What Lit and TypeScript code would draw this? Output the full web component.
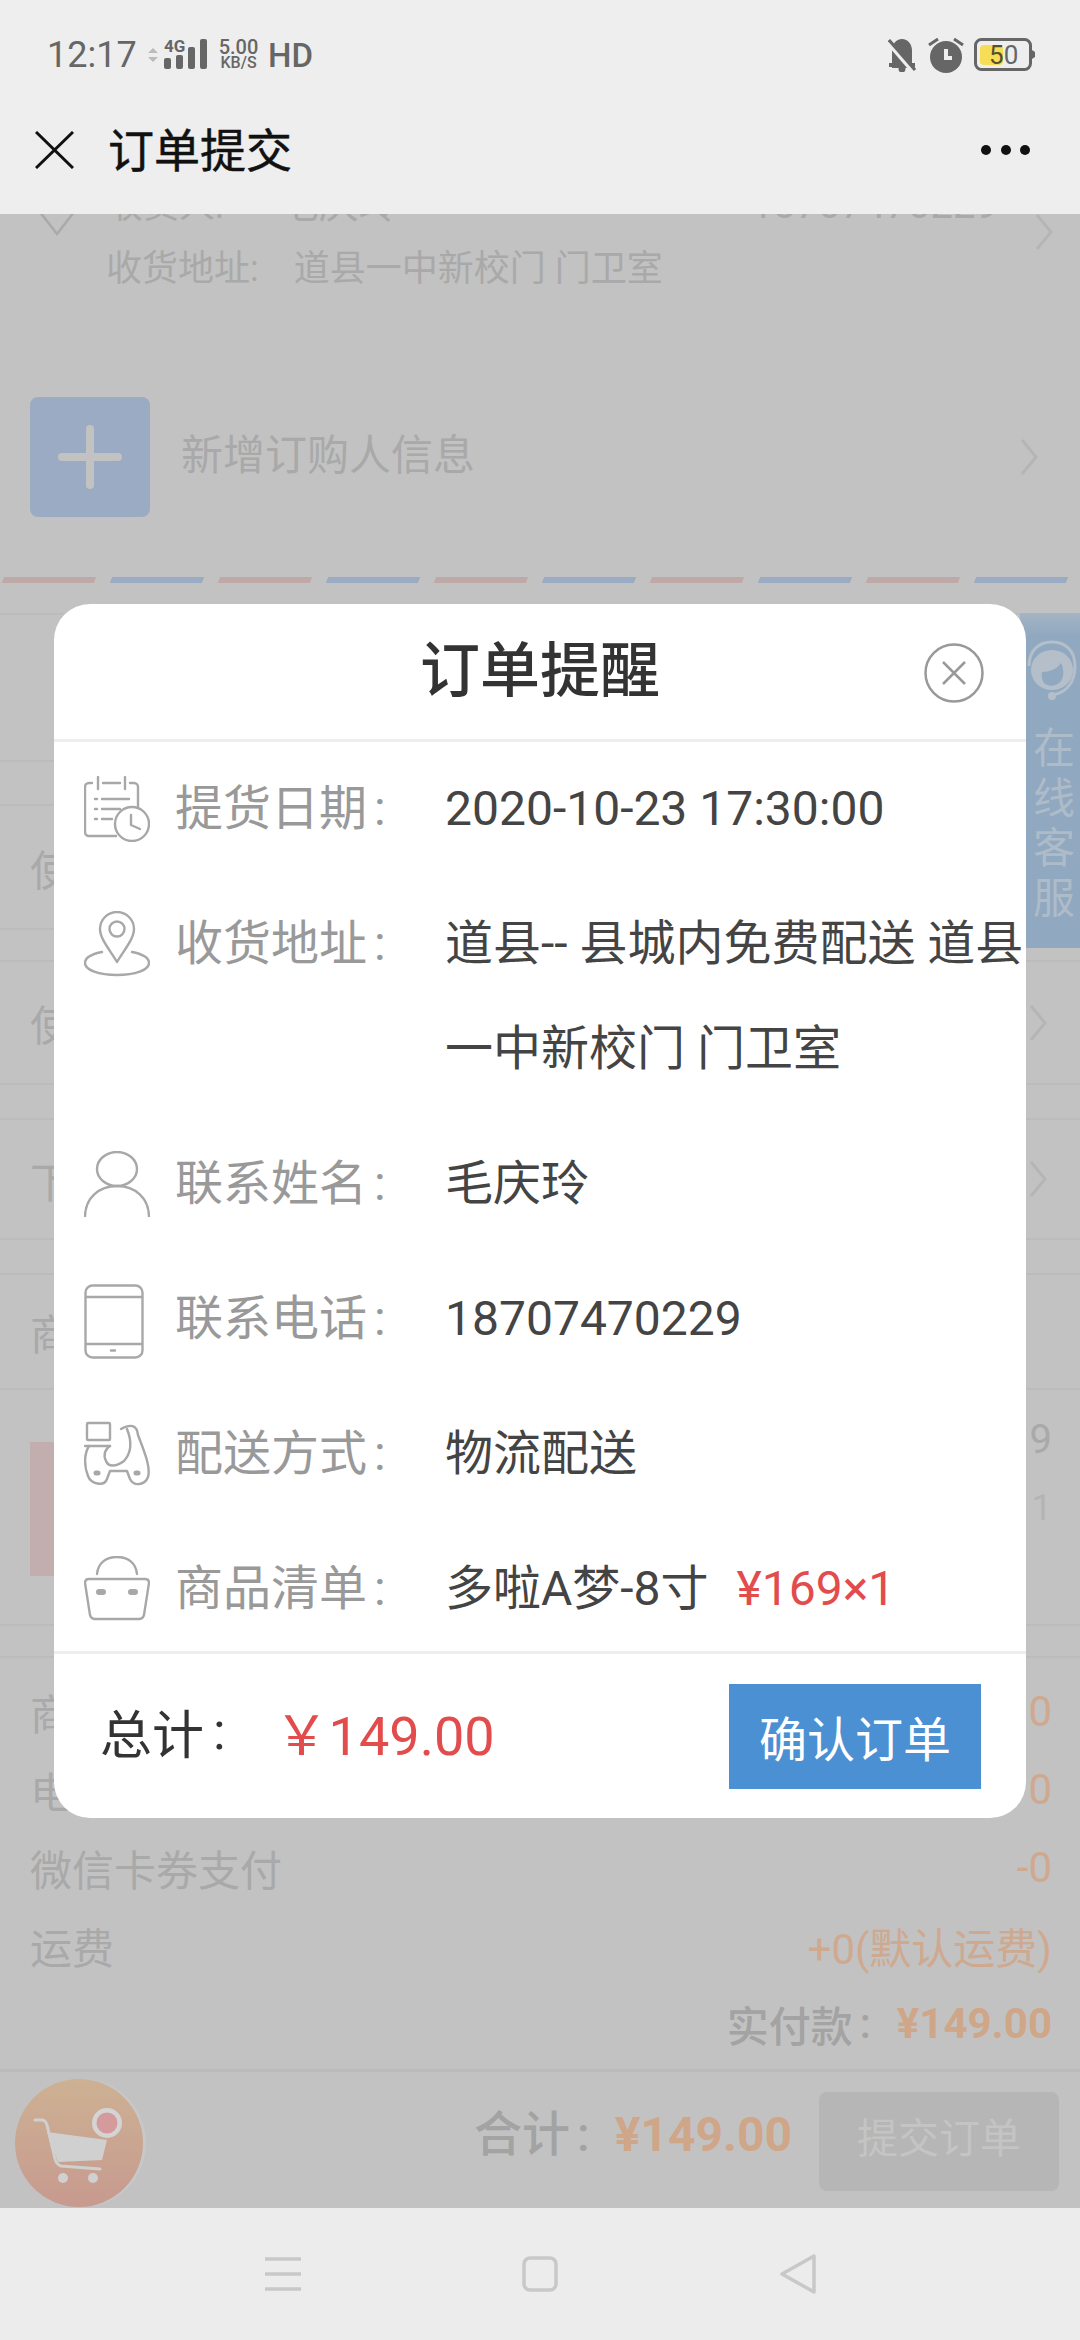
import { LitElement, html, css, svg } from "lit";
import { customElement } from "lit/decorators.js";

const modalRows = [
  { icon: "cal", label: "提货日期", value: "2020-10-23 17:30:00" },
  { icon: "pin", label: "收货地址", value: "道县-- 县城内免费配送 道县一中新校门 门卫室" },
  { icon: "user", label: "联系姓名", value: "毛庆玲" },
  { icon: "pad", label: "联系电话", value: "18707470229" },
  { icon: "moto", label: "配送方式", value: "物流配送" },
  { icon: "bag", label: "商品清单", value: "多啦A梦-8寸", price: "¥169×1" },
];

const icons: Record<string, any> = {
  cal: svg`<svg class="ic" width="66" height="66" viewBox="0 0 66 66"><path d="M8 7H5a4 4 0 0 0-4 4v45a4 4 0 0 0 4 4h27M19 7h17M46 7h4a4 4 0 0 1 4 4v21"/><path d="M14 1v12M41 1v12M18 23h27M18 33h18M18 43h10"/><path d="M11 23h2M11 33h2M11 43h2"/><circle cx="48" cy="48" r="17"/><path d="M47 39v10l9 4"/></svg>`,
  pin: svg`<svg class="ic" width="66" height="66" viewBox="0 0 66 66"><path d="M33 51C26 39 16 28 16 18a17 17 0 0 1 34 0C50 28 40 39 33 51Z"/><circle cx="33" cy="18" r="7.5"/><path d="M18 41C8 43 1 47 1 52c0 7 14 12 32 12s32-5 32-12c0-5-7-9-17-11"/></svg>`,
  user: svg`<svg class="ic" width="66" height="66" viewBox="0 0 66 66"><ellipse cx="33" cy="18" rx="20" ry="17"/><path d="M1 66C1 47 15 35 33 35s32 12 32 31"/></svg>`,
  pad: svg`<svg class="ic pad" width="60" height="75" viewBox="0 0 60 75"><rect x="1.5" y="1.5" width="57" height="72" rx="7"/><path d="M2 13h56M2 60h56M27 66.500h4"/></svg>`,
  moto: svg`<svg class="ic" width="66" height="66" viewBox="0 0 66 66"><rect x="3" y="2" width="23" height="17" rx="1"/><path d="M1 25h25"/><path d="M5 25C0 33 0 45 4 55c3 8 16 11 19 3l3-8h17l3 8c4 8 15 6 18-2 3-10-4-26-10-42-1-9-6-12-17-6"/><path d="M43 8c4 10 6 22-3 32-8 6-16 6-18 0-3-6-1-12 4-15"/><path d="M12 52h2M52 52h2" stroke-width="5" stroke-linecap="round"/></svg>`,
  bag: svg`<svg class="ic" width="66" height="66" viewBox="0 0 66 66"><path d="M13 18C14 7 22 1 33 1s19 6 20 17"/><path d="M5 23h56c2 0 4 1 4 4l-5 32c-1 3-2 4-5 4H11c-3 0-4-1-5-4L1 27c0-3 2-4 4-4Z"/><path d="M15 36h4M47 36h4" stroke-width="6" stroke-linecap="round"/></svg>`,
};

const chevron = html`<svg class="chev" width="20" height="40" viewBox="0 0 20 40"><path d="M3 3l14 17L3 37"/></svg>`;

@customElement("app-root")
export class AppRoot extends LitElement {
  static styles = css`
    :host { display: block; width: 1080px; height: 2340px; font-family: Roboto, "Noto Sans CJK SC", sans-serif; }
    .page { width: 1080px; height: 2340px; display: flex; flex-direction: column; background: #eee; overflow: hidden; }

    .status { height: 100px; padding: 10px 45px 0 47px; box-sizing: border-box; display: flex; align-items: center; color: #666; }
    .time { font-size: 36px; width: 101px; }
    .updown { margin-right: 6px; }
    .speed { width: 41px; margin: 0 9px 0 10px; display: flex; flex-direction: column; align-items: center; font-weight: 500; line-height: 16px; }
    .speed b { font-size: 20px; font-weight: 500; }
    .speed i { font-size: 16px; font-style: normal; }
    .hd { font-size: 33px; flex: 1; font-weight: 500; }
    .sright { display: flex; align-items: center; gap: 12px; }
    .sright .batt { margin-left: -2px; }

    .header { height: 114px; padding: 0 50px 14px 35px; box-sizing: border-box; display: flex; align-items: center; }
    .header h1 { margin: 0 0 6px 34px; font-size: 46px; font-weight: 400; color: #111; flex: 1; -webkit-text-stroke: 0.5px #111; }
    .dots { display: flex; gap: 9.500px; }
    .dots span { width: 10px; height: 10px; border-radius: 50%; background: #111; }

    .content { flex: 1; min-height: 0; background: #c2c2c2; position: relative; overflow: hidden; color: #a9a9a9; }
    .addr { margin-top: -30px; height: 150px; padding: 0 26px 0 38px; display: grid; grid-template-columns: 69px 1fr 20px; }
    .addr-name { display: flex; justify-content: space-between; font-size: 36px; padding-right: 36px; line-height: 42px; }
    .addr-name span:last-child { font-size: 40px; }
    .addr-gap { margin-left: 55px; }
    .addr-line { font-size: 36px; margin-top: 21px; line-height: 42px; margin-left: -1px; }
    .addr-line span { margin-left: 35px; }
    .diamond { margin-top: 6px; }
    .addr .chev { margin-top: 28px; }
    .add { margin-top: 63px; height: 120px; padding: 0 40px 0 30px; display: flex; align-items: center; }
    .addbox { width: 120px; height: 120px; border-radius: 8px; background: #9cabc4; display: flex; align-items: center; justify-content: center; }
    .addtext { flex: 1; margin: 0 0 11px 31px; font-size: 42px; }
    .add .chev { width: 22px; }
    .stripes { margin-top: 60px; height: 6px; display: flex; gap: 16px; padding-left: 3px; flex-shrink: 0; }
    .stripes span { width: 92px; flex-shrink: 0; transform: skewX(-20deg); }
    .stripes .r { background: #bfa8a8; }
    .stripes .b { background: #9cabc4; }

    .bgrow { box-sizing: border-box; border-top: 2px solid #bcbcbc; border-bottom: 2px solid #bcbcbc; padding: 0 32px 0 30px; display: flex; align-items: center; justify-content: space-between; font-size: 42px; }
    .goods { box-sizing: border-box; border-bottom: 2px solid #bcbcbc; padding: 52px 28px 0 30px; display: flex; justify-content: space-between; }
    .thumb { width: 100px; height: 134px; background: #c2aeae; }
    .gside { display: flex; flex-direction: column; align-items: flex-end; font-size: 40px; margin-top: -26px; gap: 24px; color: #a9a9a9; }
    .gside i { font-style: normal; font-size: 36px; color: #b4b4b4; }

    .prices { height: 416px; box-sizing: border-box; padding: 28px 28px 0 30px; border-top: 2px solid #bcbcbc; border-bottom: 3px solid #bbb; margin-top: 30px; }
    .line { display: flex; justify-content: space-between; align-items: center; height: 50px; margin-bottom: 28px; font-size: 42px; }
    .line span:last-child { color: #cfa98f; }
    .paid { display: flex; justify-content: flex-end; align-items: center; height: 50px; font-size: 42px; font-weight: 500; color: #a3a3a3; }
    .paid b, .sum b { color: #cfa688; font-weight: 700; }
    .paid b { margin-left: 26px; }

    .bar { height: 136px; padding: 20px 21px 0 0; box-sizing: border-box; display: flex; justify-content: flex-end; align-items: flex-start; }
    .sum { margin-top: 16px; font-size: 48px; font-weight: 500; color: #a3a3a3; line-height: 54px; }
    .sum b { margin: 0 27px 0 25px; }
    .submit { width: 240px; height: 99px; padding-bottom: 14px; box-sizing: border-box; background: #b6b6b6; border-radius: 8px; color: #c4c4c4; font-size: 41px; display: flex; align-items: center; justify-content: center; }

    .cart { position: absolute; left: 15px; top: 1865px; width: 128px; height: 128px; border-radius: 50%; background: linear-gradient(#cdb193, #c79a8f); box-shadow: 3px 0 0 #c8c8c8; }
    .service { position: absolute; left: 1020px; top: 399px; width: 60px; height: 335px; background: linear-gradient(#a4b4c4, #90a8c0 7%); color: #aebbc8; display: flex; flex-direction: column; align-items: center; padding: 20px 0 0 0; box-sizing: border-box; font-size: 42px; line-height: 50px; }
    .service svg { margin: 7px 0 22px; margin-left: 4px; }
    .service div { margin-left: 8px; }

    .overlay { position: absolute; inset: 0; display: flex; align-items: center; justify-content: center; }
    .modal { width: 972px; height: 1214px; background: #fff; border-radius: 36px; display: flex; flex-direction: column; overflow: hidden; }
    .mhead { height: 138px; box-sizing: border-box; flex-shrink: 0; position: relative; border-bottom: 3px solid #eee; display: flex; align-items: center; justify-content: center; }
    .mhead h2 { margin: 0 0 12px; font-size: 60px; font-weight: 500; color: #333; }
    .close { position: absolute; left: 870px; top: 39px; }
    .close circle, .close path { fill: none; stroke: #999; stroke-width: 2.5; }
    .rows { flex: 1; padding: 14px 0 0 30px; display: flex; flex-direction: column; gap: 30px; font-size: 48px; line-height: 105px; }
    .row { display: grid; grid-template-columns: 66px 295px 1fr; }
    .iconbox { height: 105px; display: flex; align-items: center; }
    .ic { fill: none; stroke: #a8a8a8; stroke-width: 2.4; stroke-linecap: round; stroke-linejoin: round; }
    .pad { margin-top: 5px; }
    .label { padding-left: 25px; color: #999; white-space: nowrap; }
    .colon { margin-left: 7px; }
    .value { color: #444; }
    .price { color: #e24c4c; margin-left: 28px; }
    .mfoot { height: 167px; flex-shrink: 0; border-top: 3px solid #eee; box-sizing: border-box; padding: 0 45px 0 46px; display: flex; align-items: center; justify-content: space-between; }
    .total { font-size: 52px; color: #333; display: flex; align-items: center; margin-bottom: 9px; }
    .total .colon { margin-left: 9px; }
    .total b { font-weight: 400; font-size: 54px; color: #e24c4c; margin-left: 49px; }
    .confirm { width: 252px; height: 105px; background: #4a90d2; color: #fff; font-size: 48px; display: flex; align-items: center; justify-content: center; }

    .nav { height: 132px; flex-shrink: 0; background: #ececec; position: relative; display: flex; align-items: center; justify-content: center; gap: 221px; box-sizing: border-box; }
    .nav svg { fill: none; stroke: #c8c8c8; stroke-width: 3.500; }
    .chev { fill: none; stroke: #b5b5b5; stroke-width: 3; flex-shrink: 0; }
  `;

  private stripes() {
    return Array.from({ length: 10 }, (_, i) => html`<span class=${i % 2 ? "b" : "r"}></span>`);
  }

  private bgRow(h: number, mt: number, text: string, chev = false) {
    return html`<div class="bgrow" style="height:${h}px;margin-top:${mt}px"><span>${text}</span>${chev ? chevron : ""}</div>`;
  }

  render() {
    return html`<div class="page">
      <div class="status">
        <span class="time">12:17</span>
        <svg class="updown" width="10" height="14" viewBox="0 0 10 14"><path d="M5 0l5 5H0zM5 14L0 9h10z" fill="#bbb"/></svg>
        <svg width="44" height="32" viewBox="0 0 44 32"><text x="0" y="13" font-family="Roboto" font-size="17" font-weight="700" fill="#666">4G</text><g fill="#666"><rect x="0" y="19" width="7" height="11" rx="2"/><rect x="12" y="16" width="7" height="14" rx="2"/><rect x="24" y="8" width="7" height="22" rx="2"/><rect x="36" y="0" width="7" height="30" rx="2"/></g></svg>
        <div class="speed"><b>5.00</b><i>KB/S</i></div>
        <span class="hd">HD</span>
        <div class="sright">
          <svg width="28" height="34" viewBox="0 0 28 34"><path d="M4 30V13C4 6 8 1 14 1s10 5 10 12v17z" fill="#666"/><path d="M1 27h26" stroke="#666" stroke-width="4"/><circle cx="14" cy="31" r="3.500" fill="#666"/><path d="M0 4l25 29" stroke="#eee" stroke-width="5"/><path d="M1 2l26 30" stroke="#666" stroke-width="3"/></svg>
          <svg width="36" height="36" viewBox="0 0 36 36"><circle cx="18" cy="20" r="16" fill="#666"/><path d="M18 12v9h6" fill="none" stroke="#eee" stroke-width="4"/><path d="M1 8l9-6M35 8l-9-6" stroke="#666" stroke-width="3"/></svg>
          <svg class="batt" width="61" height="34" viewBox="0 0 61 34"><rect x="1.500" y="1.500" width="55" height="30" rx="6" fill="none" stroke="#666" stroke-width="3"/><rect x="6" y="7" width="23" height="20" rx="4" fill="#f7dc55"/><path d="M58 12l3 2v5l-3 2z" fill="#666"/><text x="15" y="26" font-family="Roboto" font-size="26"><tspan fill="#55502f">5</tspan><tspan fill="#666">0</tspan></text></svg>
        </div>
      </div>
      <div class="header">
        <svg width="39" height="38" viewBox="0 0 39 38"><path d="M1 1l37 36M38 1L1 37" stroke="#111" stroke-width="3" fill="none"/></svg>
        <h1>订单提交</h1>
        <div class="dots"><span></span><span></span><span></span></div>
      </div>

      <div class="content">
        <div class="addr">
          <svg class="diamond" width="38" height="46" viewBox="0 0 38 46"><path d="M19 44L2 22 19 2l17 20z" fill="none" stroke="#aaa" stroke-width="2.500"/></svg>
          <div>
            <div class="addr-name"><span>收货人:<span class="addr-gap">毛庆玲</span></span><span>18707470229</span></div>
            <div class="addr-line">收货地址:<span>道县一中新校门 门卫室</span></div>
          </div>
          ${chevron}
        </div>
        <div class="add">
          <div class="addbox"><svg width="64" height="64" viewBox="0 0 64 64"><path d="M32 4v56M4 32h56" stroke="#c2c2c2" stroke-width="8" stroke-linecap="round"/></svg></div>
          <div class="addtext">新增订购人信息</div>
          ${chevron}
        </div>
        <div class="stripes">${this.stripes()}</div>
        ${this.bgRow(149, 30, "")}
        ${this.bgRow(126, 42, "使")}
        ${this.bgRow(125, 30, "使", true)}
        ${this.bgRow(122, 33, "下", true)}
        ${this.bgRow(117, 33, "商")}
        <div class="goods" style="height:236px">
          <div class="thumb"></div>
          <div class="gside"><span>9</span><i>1</i></div>
        </div>
        <div class="prices">
          <div class="line"><span>商</span><span>0</span></div>
          <div class="line"><span>电</span><span>0</span></div>
          <div class="line"><span>微信卡券支付</span><span>-0</span></div>
          <div class="line"><span>运费</span><span>+0(默认运费)</span></div>
          <div class="paid">实付款<span class="colon">:</span><b>¥149.00</b></div>
        </div>
        <div class="bar">
          <div class="sum">合计<span class="colon">:</span><b>¥149.00</b></div>
          <div class="submit">提交订单</div>
        </div>

        <div class="cart">
          <svg width="128" height="128" viewBox="0 0 128 128"><path d="M20 41h7c3 0 4 2 5 5l8 34c1 4 3 6 6 7l39 3" fill="none" stroke="#d0d0d0" stroke-width="3" stroke-linecap="round"/><path d="M32 53l60 8-5 20-44 2z" fill="#d0d0d0"/><circle cx="48" cy="99" r="5" fill="#d0d0d0"/><circle cx="78" cy="99" r="5" fill="#d0d0d0"/><circle cx="92" cy="44" r="15" fill="#d4d4d4"/><circle cx="92" cy="44" r="10.500" fill="#d49a9c"/></svg>
        </div>
        <div class="service">
          <svg width="52" height="62" viewBox="0 0 52 62"><path d="M3 26C3 10 13 2 26 2s23 8 23 24c0 16-8 26-22 29" fill="none" stroke="#b5bfca" stroke-width="3"/><ellipse cx="26" cy="30" rx="21" ry="20" fill="#b5bfca"/><path d="M16 32c8 0 15-3 19-9 3 6 3 12 1 16-3 7-13 9-18 4-2-3-3-7-2-11z" fill="#90a8c0"/><circle cx="26" cy="56" r="4" fill="#b5bfca"/></svg>
          <div>在</div><div>线</div><div>客</div><div>服</div>
        </div>

        <div class="overlay">
          <div class="modal">
            <div class="mhead">
              <h2>订单提醒</h2>
              <svg class="close" width="60" height="60" viewBox="0 0 60 60"><circle cx="30" cy="30" r="28.500"/><path d="M19 19l22 22M41 19L19 41"/></svg>
            </div>
            <div class="rows">
              ${modalRows.map(
                (r) => html`<div class="row">
                  <div class="iconbox">${icons[r.icon]}</div>
                  <div class="label">${r.label}<span class="colon">:</span></div>
                  <div class="value">${r.value}${r.price ? html`<span class="price">${r.price}</span>` : ""}</div>
                </div>`
              )}
            </div>
            <div class="mfoot">
              <div class="total">总计<span class="colon">:</span><b>￥149.00</b></div>
              <div class="confirm">确认订单</div>
            </div>
          </div>
        </div>
      </div>

      <div class="nav">
        <svg width="36" height="34" viewBox="0 0 36 34"><path d="M0 2h36M0 17h36M0 32h36"/></svg>
        <svg width="36" height="36" viewBox="0 0 36 36"><rect x="2" y="2" width="32" height="32" rx="6"/></svg>
        <svg width="37" height="40" viewBox="0 0 37 40"><path d="M35 2v36L3 20z" stroke-linejoin="round"/></svg>
      </div>
    </div>`;
  }
}
